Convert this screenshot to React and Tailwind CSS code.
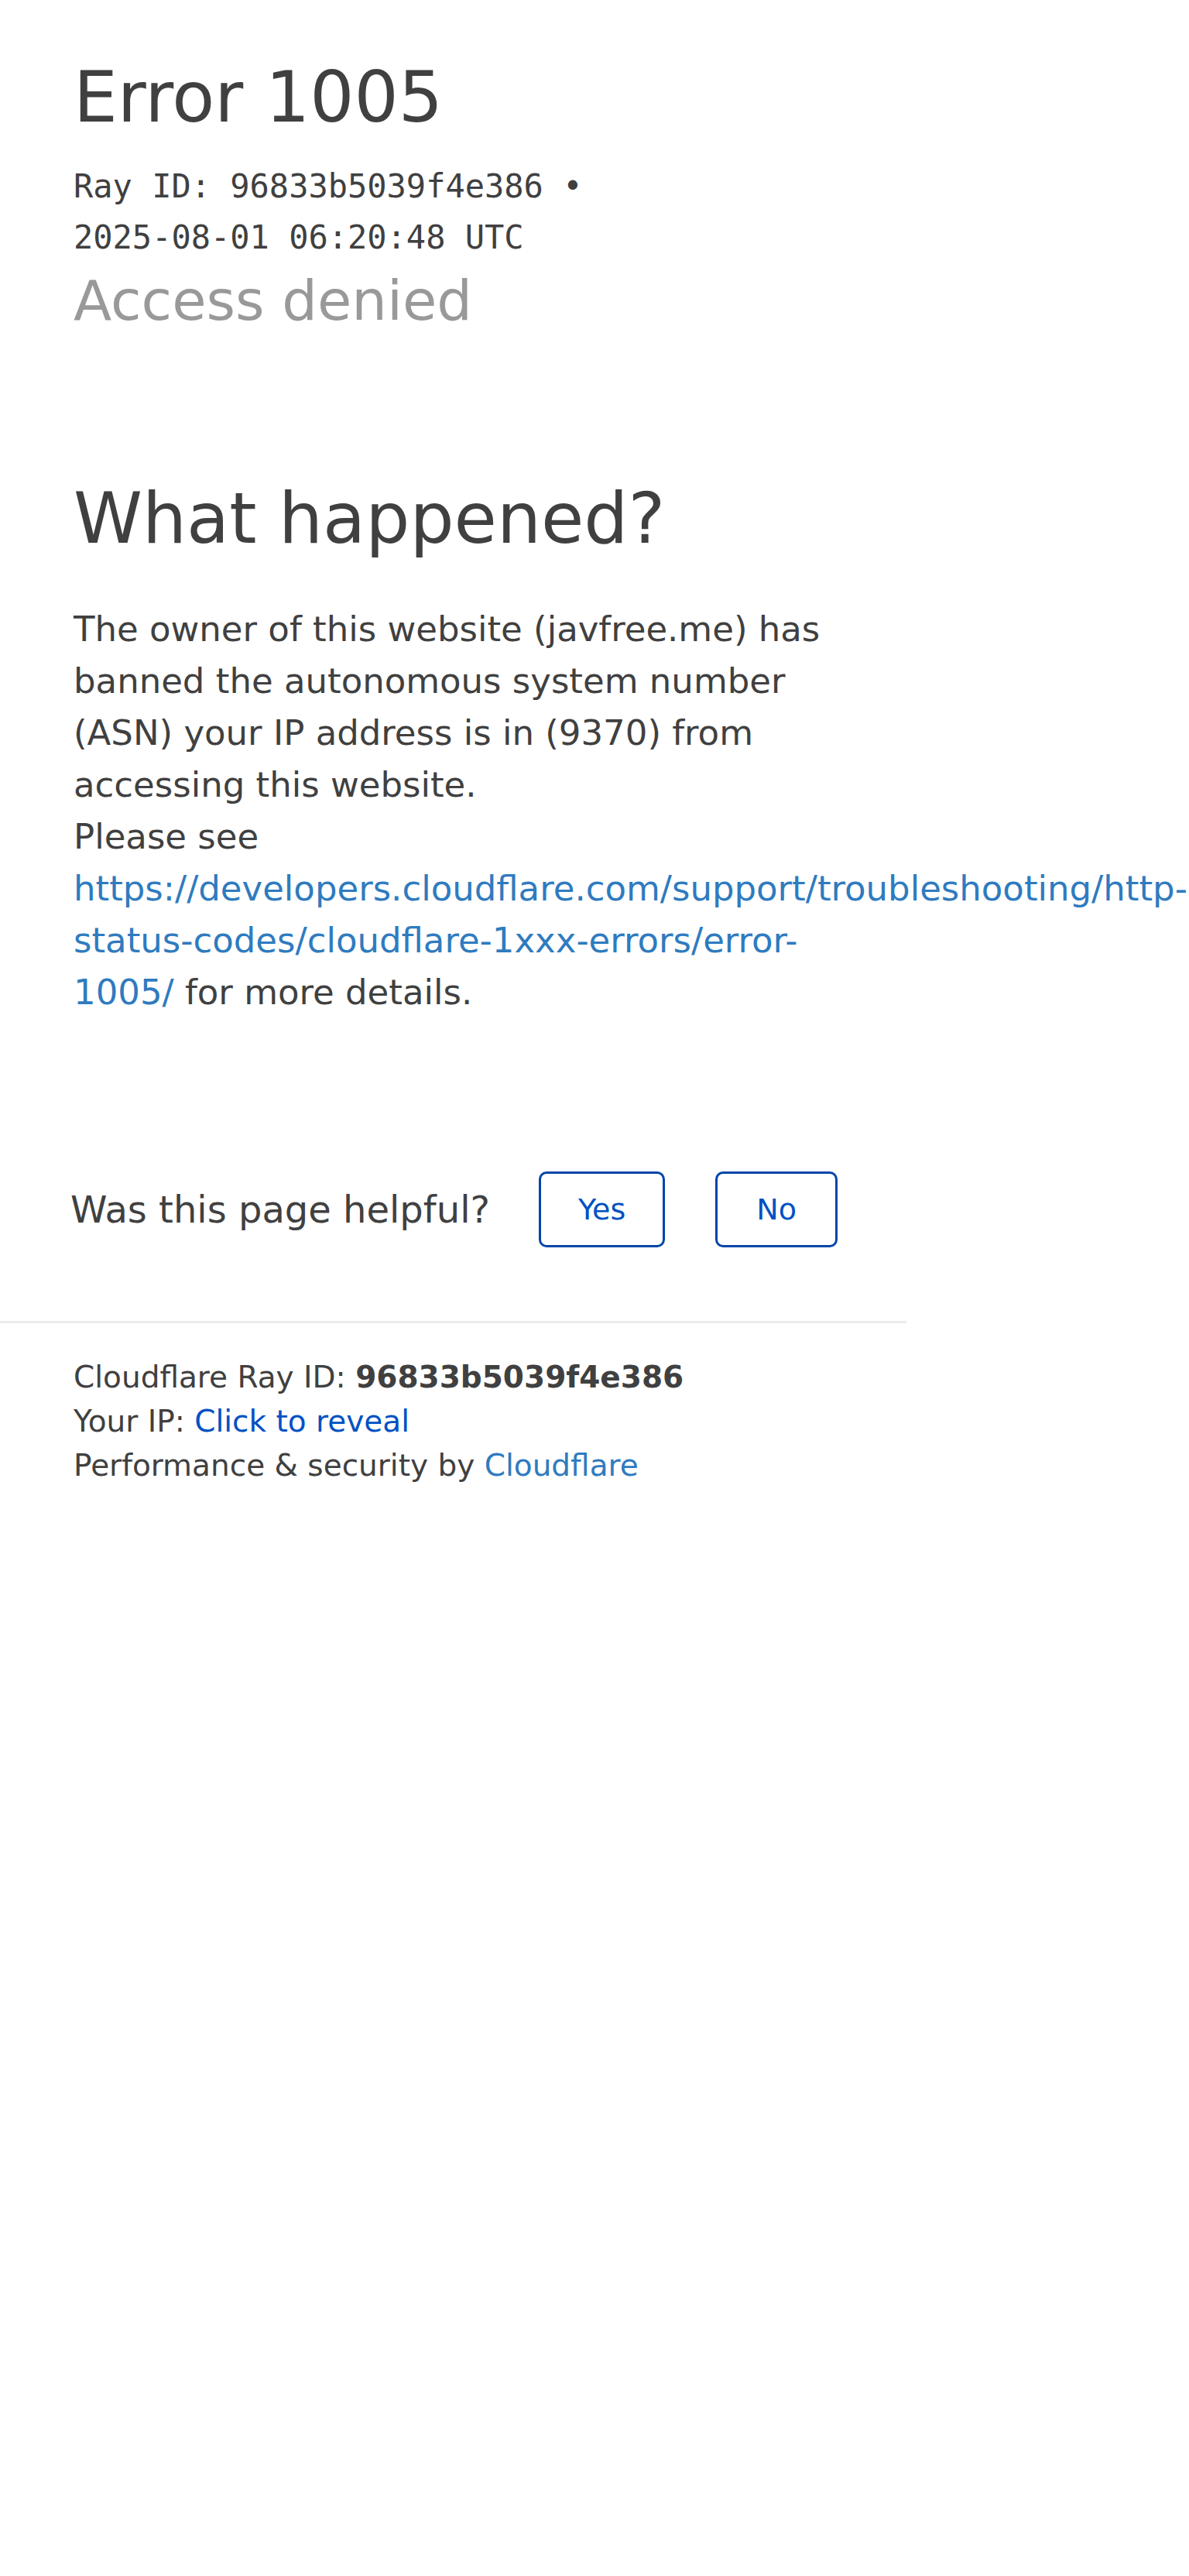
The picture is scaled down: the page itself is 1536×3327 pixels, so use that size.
export default function App() {
  return (
    <div className="min-h-screen bg-white font-['DejaVu_Sans',sans-serif] text-[#404040]">
      <div className="w-[1171px]">
        {/* Header */}
        <section className="px-[95px] pt-[73px]">
          <h1 className="text-[90px] leading-[105px] font-normal">Error 1005</h1>
          <p className="mt-[30px] font-['DejaVu_Sans_Mono',monospace] text-[42px] leading-[66px]">
            Ray ID: 96833b5039f4e386 • <span className="whitespace-nowrap">2025-08-01 06:20:48 UTC</span>
          </p>
          <h2 className="mt-[6px] text-[72px] leading-[84px] font-normal text-[#999999]">Access denied</h2>
        </section>

        {/* What happened */}
        <section className="px-[95px] pt-[187px]">
          <h2 className="text-[90px] leading-[105px] font-normal">What happened?</h2>
          <div className="mt-[57px] text-[45px] leading-[67px]">
            <p>
              The owner of this website (javfree.me) has banned the autonomous system number (ASN) your IP
              address is in (9370) from accessing this website.
            </p>
            <p>
              Please see{' '}
              <a href="#" className="text-[#2f7bbf]">
                https://developers.cloudflare.com/support/troubleshooting/http-status-codes/cloudflare-1xxx-errors/error-1005/
              </a>{' '}
              for more details.
            </p>
          </div>
        </section>

        {/* Feedback */}
        <section className="px-[95px] pt-[198px] pb-[95px]">
          <div className="flex items-center gap-[63px] whitespace-nowrap">
            <span className="shrink-0 text-[48px] leading-[67px] -ml-[4px]">Was this page helpful?</span>
            <div className="flex shrink-0 gap-[65px]">
              <button className="h-[98px] px-[48px] border-[3px] border-[#0045a8] rounded-[10px] text-[38px] text-[#0051c3]">
                Yes
              </button>
              <button className="h-[98px] px-[50px] border-[3px] border-[#0045a8] rounded-[10px] text-[38px] text-[#0051c3]">
                No
              </button>
            </div>
          </div>
        </section>

        {/* Footer */}
        <footer className="border-t-[3px] border-[#ebebeb] px-[95px] pt-[41px] text-[39px] leading-[57px]">
          <p>
            Cloudflare Ray ID: <strong className="font-bold">96833b5039f4e386</strong>
          </p>
          <p>
            Your IP: <button className="text-[#0051c3]">Click to reveal</button>
          </p>
          <p>
            Performance &amp; security by{' '}
            <a href="#" className="text-[#2f7bbf]">
              Cloudflare
            </a>
          </p>
        </footer>
      </div>
    </div>
  )
}
